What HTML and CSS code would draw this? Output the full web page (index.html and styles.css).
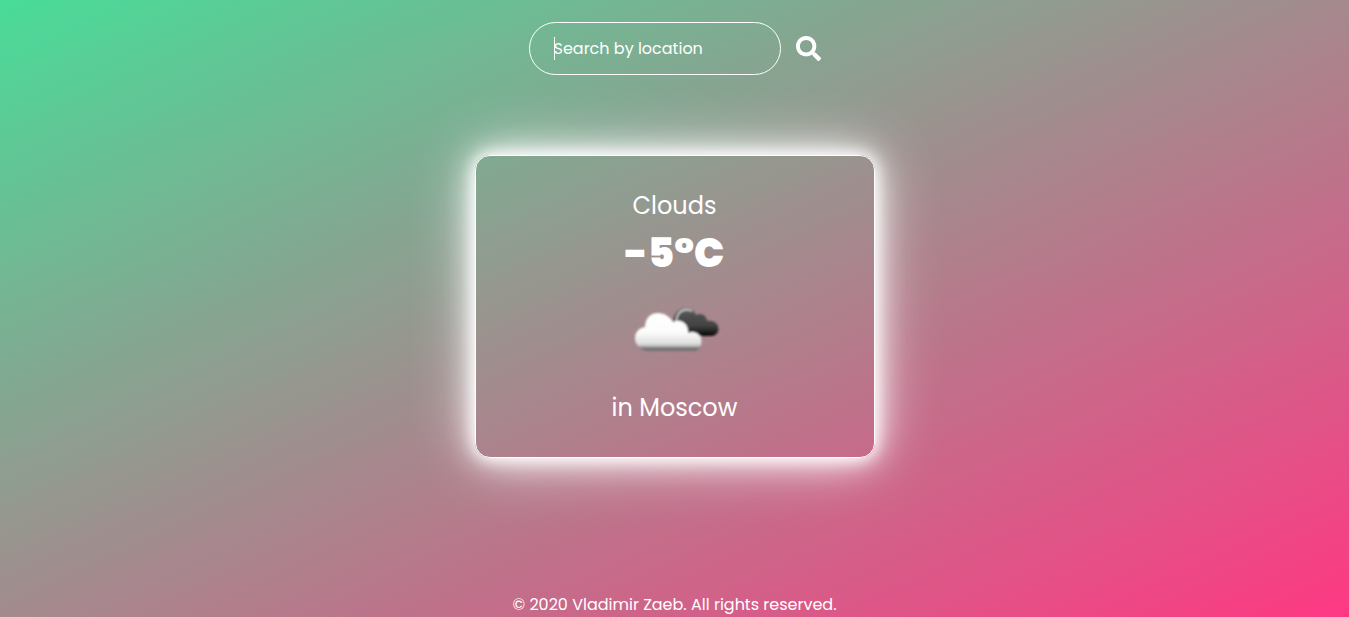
FILE: index.html
```html
<!DOCTYPE html>
<html lang="en">
<head>
<meta charset="utf-8">
<title>Weather</title>
<link rel="stylesheet" href="styles.css">
</head>
<body>
<form class="search">
  <div class="field"><span class="caret"></span><span class="placeholder">Search by location</span></div>
  <svg class="search-icon" viewBox="0 0 512 512" aria-label="Search"><path fill="#fff" d="M505 442.700L405.300 343c-4.500-4.500-10.600-7-17-7H372c27.600-35.300 44-79.700 44-128C416 93.100 322.900 0 208 0S0 93.100 0 208s93.100 208 208 208c48.300 0 92.700-16.400 128-44v16.300c0 6.400 2.500 12.500 7 17l99.700 99.700c9.400 9.400 24.600 9.400 33.900 0l28.300-28.300c9.400-9.400 9.400-24.600.1-34zM208 336c-70.700 0-128-57.200-128-128 0-70.700 57.200-128 128-128 70.700 0 128 57.200 128 128 0 70.700-57.200 128-128 128z"/></svg>
</form>
<main class="card">
  <div class="condition">Clouds</div>
  <div class="temp"><span class="minus">-</span><span class="deg">5°C</span></div>
  <svg class="clouds" viewBox="0 0 100 100">
    <defs>
      <linearGradient id="front" x1="0" y1="0" x2="0" y2="1"><stop offset="0" stop-color="#fff"/><stop offset=".5" stop-color="#fcfcfc"/><stop offset=".8" stop-color="#dedede"/><stop offset=".87" stop-color="#bbb"/><stop offset=".92" stop-color="#777"/><stop offset="1" stop-color="#707070"/></linearGradient>
      <linearGradient id="back" x1="0" y1="0" x2="0" y2="1"><stop offset="0" stop-color="#777"/><stop offset=".25" stop-color="#505050"/><stop offset=".65" stop-color="#424242"/><stop offset="1" stop-color="#080808"/></linearGradient>
      <filter id="soft"><feGaussianBlur stdDeviation=".8"/></filter>
    </defs>
    <g filter="url(#soft)">
      <path fill="url(#back)" d="M47 48C47 34 53 26.500 61 26.500C66 26.500 69 29 71 34C76 31 82 35 82 40C89 39 93.500 43 93.500 48C93.500 52 90 55 86 55H55Z"/>
      <path fill="none" stroke="#c4c4c4" stroke-width="1.800" d="M51.500 42C51 33 56 28.500 62 28.500C64 28.500 66 29.500 67 30"/>
      <path fill="url(#front)" d="M20 70C14 67 10 63 10 57C10 51 14 47 20 46C20 38 25 32 33 32C40 32 45 36 48 41C56 37 64 43 63 52C70 49 76.500 54 76.500 60C76.500 65 74 69 70 70Z"/>
    </g>
  </svg>
  <div class="city">in Moscow</div>
</main>
<footer class="footer">© 2020 Vladimir Zaeb. All rights reserved.</footer>
</body>
</html>
```
FILE: styles.css
```css
* { box-sizing: border-box; }
body {
  margin: 0;
  height: 617px;
  padding-top: 22px;
  display: flex;
  flex-direction: column;
  align-items: center;
  overflow: hidden;
  color: #fff;
  font-family: Poppins, Inter, sans-serif;
  background: linear-gradient(155deg, #49dc98, #ff3883);
}
.search { display: flex; align-items: center; gap: 15px; margin-bottom: 80px; height: 53px; }
.field {
  width: 252px;
  height: 53px;
  border: 1px solid #fff;
  border-radius: 27px;
  padding-left: 24px;
  display: flex;
  align-items: center;
  font-size: 16px;
}
.caret { width: 1px; height: 23px; background: #fff; margin-right: -1px; }
.placeholder { white-space: nowrap; }
.search-icon { width: 25px; height: 25px; margin-top: -1px; }
.card {
  width: 400px;
  height: 303px;
  border: 1px solid #fff;
  border-radius: 15px;
  padding-top: 31px;
  display: flex;
  flex-direction: column;
  align-items: center;
  box-shadow: 0 0 15px #fff, 0 0 30px #fff, 0 0 60px rgba(255, 255, 255, .85);
}
.condition { font-size: 24px; line-height: 38px; }
.temp { display: flex; font-size: 40px; line-height: 56px; font-weight: 900; }
.clouds { width: 100px; height: 100px; }
.city { font-size: 24px; line-height: 38px; margin-top: 8px; }
.footer { margin-top: auto; font-size: 16px; line-height: 25px; white-space: nowrap; }
```
